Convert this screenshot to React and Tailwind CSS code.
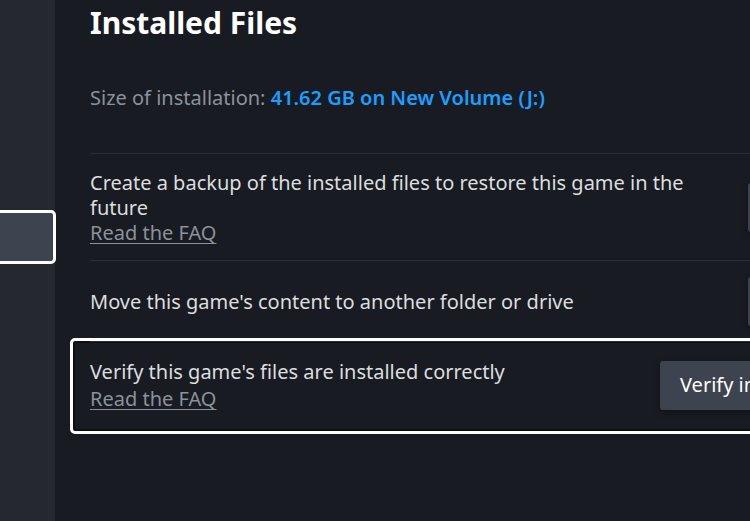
import React from 'react'

const font = { fontFamily: '"Noto Sans", "Open Sans", Arial, sans-serif' }

function Row({ children, button, focused, pad = 'py-4' }) {
  return (
    <div
      className={
        focused
          ? '-mx-5 -mt-[4px] rounded-[5px] border-[3px] border-white px-[17px] shadow-[inset_0_0_0_2px_#0d0f13]'
          : '-mx-5 px-5'
      }
    >
      <div className={`flex items-center border-t border-[#2a2e36] ${pad}`}>
        <div className="flex-1 text-[20px] leading-[25px] text-[#dcdedf]">{children}</div>
        {button}
      </div>
    </div>
  )
}

function Faq({ className = '' }) {
  return (
    <div className={`text-[#8b929a] underline decoration-1 underline-offset-[3px] ${className}`}>
      Read the FAQ
    </div>
  )
}

function Btn({ label, width }) {
  return (
    <div
      className={`flex h-[49px] shrink-0 items-center whitespace-nowrap rounded-[3px] bg-[#3d4450] px-5 text-[20px] text-white shadow-[0_2px_6px_rgba(0,0,0,0.35)] ${width}`}
    >
      {label}
    </div>
  )
}

export default function App() {
  return (
    <div className="flex h-[521px] w-[750px] overflow-hidden bg-[#181b22]" style={font}>
      <aside className="flex w-[55px] shrink-0 flex-col bg-[#25282f] pt-[210px]">
        <div className="-ml-4 h-[54px] w-[72px] shrink-0 rounded-[5px] border-[3px] border-white bg-[#3e4350]" />
      </aside>

      <main className="min-w-0 flex-1 overflow-hidden pl-[35px]">
        <div className="w-[900px]">
          <h1 className="mt-[3px] text-[30px] font-bold leading-[40px] text-white">Installed Files</h1>

          <p className="mt-[42px] text-[20px] leading-[25px] text-[#8b929a]">
            Size of installation:{' '}
            <span className="font-semibold text-[#1a9fff]">41.62 GB on New Volume (J:)</span>
          </p>

          <div className="mt-[43px]">
            <Row pad="pt-4 pb-[15px]" button={<Btn label="Backup game files" width="w-[242px]" />}>
              <div className="w-[612px]">
                Create a backup of the installed files to restore this game in the future
              </div>
              <Faq />
            </Row>
            <Row button={<Btn label="Move install folder" width="w-[242px]" />}>
              Move this game's content to another folder or drive
            </Row>
            <Row
              focused
              pad="pt-[17px] pb-[20px]"
              button={<Btn label="Verify integrity of game files" width="w-[330px]" />}
            >
              Verify this game's files are installed correctly
              <Faq className="mt-[2px]" />
            </Row>
          </div>
        </div>
      </main>
    </div>
  )
}
